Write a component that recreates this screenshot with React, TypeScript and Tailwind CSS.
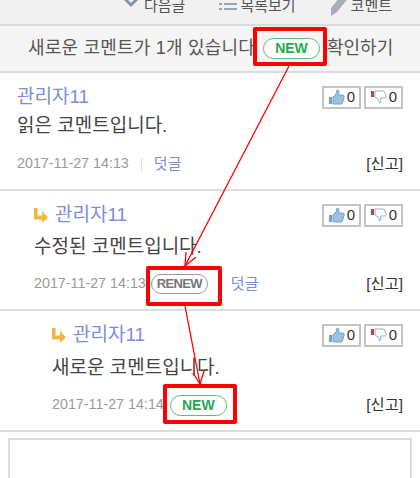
const font = { fontFamily: '"Liberation Sans", "Noto Sans CJK KR", sans-serif' };

const ThumbUp = () => (
  <svg width="17" height="16" viewBox="0 0 17 16">
    <path d="M1 8h3v7H1z" fill="#6fa3cf" />
    <path d="M5 8l3-3 1-4c1.500 0 2 1 2 2l-.5 3H15c1 0 1.500 1 1 2l-1.500 6c-.2.700-.8 1-1.500 1H5z" fill="#9cc2e2" stroke="#6fa3cf" />
  </svg>
);

const ThumbDown = () => (
  <svg width="17" height="16" viewBox="0 0 17 16">
    <path d="M1 2h3v6H1z" fill="#b5484c" />
    <path d="M5 2h8c.8 0 1.300.4 1.500 1L16 7c.3 1-.3 2-1 2h-4.500l.5 3c0 1-.5 2-1.500 2l-1-3.500L5 8z" fill="#fff" stroke="#8fb0c8" />
  </svg>
);

const ReplyArrow = () => (
  <svg width="14" height="15" viewBox="0 0 14 15">
    <path d="M0 0h3.500v7.500H8V3L14 9.500 8 15v-3.500H0z" fill="#f0b545" />
  </svg>
);

const VoteButtons = () => (
  <div className="flex gap-[3px]">
    <div className="flex h-[23px] w-[39px] items-center justify-center gap-[2px] border-2 border-[#c4c4c4] text-[15px] text-[#333]">
      <ThumbUp />0
    </div>
    <div className="flex h-[23px] w-[39px] items-center justify-center gap-[2px] border-2 border-[#c4c4c4] text-[15px] text-[#333]">
      <ThumbDown />0
    </div>
  </div>
);

const NewBadge = () => (
  <span className="inline-flex h-[21px] w-[57px] items-center justify-center rounded-full border border-[#5dba7d] bg-white text-[14px] font-bold text-[#27a653]">
    NEW
  </span>
);

const comments = [
  { indent: "pl-[17px]", body: "읽은 코멘트입니다.", time: "2017-11-27 14:13", height: "h-[118px]", bodyGap: "mt-[4px]", footGap: "mt-[15px]" },
  { indent: "pl-[34px]", body: "수정된 코멘트입니다.", time: "2017-11-27 14:13", height: "h-[120px]", bodyGap: "mt-[7px]", footGap: "mt-[14px]" },
  { indent: "pl-[52px]", body: "새로운 코멘트입니다.", time: "2017-11-27 14:14", height: "h-[121px]", bodyGap: "mt-[8px]", footGap: "mt-[14px]" },
];

export default function App() {
  return (
    <div className="relative h-[478px] w-[420px] overflow-hidden bg-white text-[#333]" style={font}>
      {/* Top nav, cut off by the crop */}
      <div className="flex h-[26px] items-end justify-end gap-[34px] overflow-hidden border-b-2 border-[#dcdcdc] bg-[#f1f1f1] pb-[3px] pr-[28px] text-[15px] leading-[30px] text-[#555]">
        <div className="flex items-center gap-[4px]">
          <svg width="18" height="12" viewBox="0 0 18 12" className="mb-[8px]">
            <path d="M1 1l8 8 8-8" fill="none" stroke="#8b93a3" strokeWidth="3" />
          </svg>
          다음글
        </div>
        <div className="flex items-center gap-[3px]">
          <svg width="18" height="14" viewBox="0 0 18 14" className="mb-[4px]">
            <path d="M0 1h3v2H0zM5 1h13v2H5zM0 6h3v2H0zM5 6h13v2H5zM0 11h3v2H0zM5 11h13v2H5z" fill="#9ba3b3" />
          </svg>
          목록보기
        </div>
        <div className="flex items-center gap-[1px]">
          <svg width="20" height="24" viewBox="0 0 20 24" className="mt-[-5px]">
            <path d="M14 0l6 4L7 20l-6 4 0-8z" fill="#a8adb8" />
          </svg>
          코멘트
        </div>
      </div>

      {/* New comment notice */}
      <div className="flex h-[47px] items-center justify-center border-b-2 border-[#dcdcdc] bg-[#f5f5f5] text-[18px] text-[#555]">
        <span className="w-[224px] whitespace-nowrap tracking-[0.2px]">새로운 코멘트가 1개 있습니다</span>
        <span className="ml-[11px] flex">
          <NewBadge />
        </span>
        <span className="ml-[7px] w-[65px] whitespace-nowrap">확인하기</span>
      </div>

      {/* Comment list */}
      {comments.map((c, i) => (
        <div key={i} className={`${c.height} ${c.indent} border-b-2 border-[#dedede] pr-[17px] pt-3`}>
          <div className="flex items-center justify-between">
            <div className="flex items-center gap-[7px] text-[19px] leading-[24px] text-[#7c8ed6]">
              {i > 0 && <ReplyArrow />}
              관리자11
            </div>
            <VoteButtons />
          </div>
          <p className={`${c.bodyGap} text-[19px] leading-[26px] text-[#444]`}>{c.body}</p>
          <div className={`${c.footGap} flex h-5 items-center text-[14.3px] text-[#9a9a9a]`}>
            <span>{c.time}</span>
            {i === 0 && (
              <>
                <span className="mx-[12px] h-[13px] w-px bg-[#ddd]" />
                <span className="text-[15px] text-[#7c8ed6]">덧글</span>
              </>
            )}
            {i === 1 && (
              <>
                <span className="ml-[5px] inline-flex h-5 w-[57px] items-center justify-center rounded-full border border-[#999] text-[13px] font-bold tracking-[-0.6px] text-[#777]">
                  RENEW
                </span>
                <span className="ml-[23px] text-[15px] text-[#7c8ed6]">덧글</span>
              </>
            )}
            {i === 2 && (
              <span className="ml-[6px] flex">
                <NewBadge />
              </span>
            )}
            <span className="ml-auto text-[15.300px] text-[#333]">[신고]</span>
          </div>
        </div>
      ))}

      {/* Comment input */}
      <div className="px-[8px] pt-[6px]">
        <div className="h-[60px] border-2 border-[#dcdcdc]" />
      </div>

      {/* Red annotation boxes */}
      <div className="absolute left-[253px] top-[27px] h-[39px] w-[74px] rounded-[2px] border-[4px] border-[#ff0000]" />
      <div className="absolute left-[146px] top-[266px] h-[40px] w-[76px] rounded-[2px] border-[4px] border-[#ff0000]" />
      <div className="absolute left-[163px] top-[384px] h-[40px] w-[74px] rounded-[2px] border-[4px] border-[#ff0000]" />

      {/* Red annotation arrows */}
      <svg className="absolute left-0 top-0" width="420" height="478" viewBox="0 0 420 478">
        <path d="M289 66L185 266M185 306L200 384" fill="none" stroke="#ff0000" strokeWidth="1.300" />
        <path d="M186 252L185 266L196 257" fill="none" stroke="#ff0000" strokeWidth="1.300" />
        <path d="M193 373L200 384L204 371" fill="none" stroke="#ff0000" strokeWidth="1.300" />
      </svg>
    </div>
  );
}
